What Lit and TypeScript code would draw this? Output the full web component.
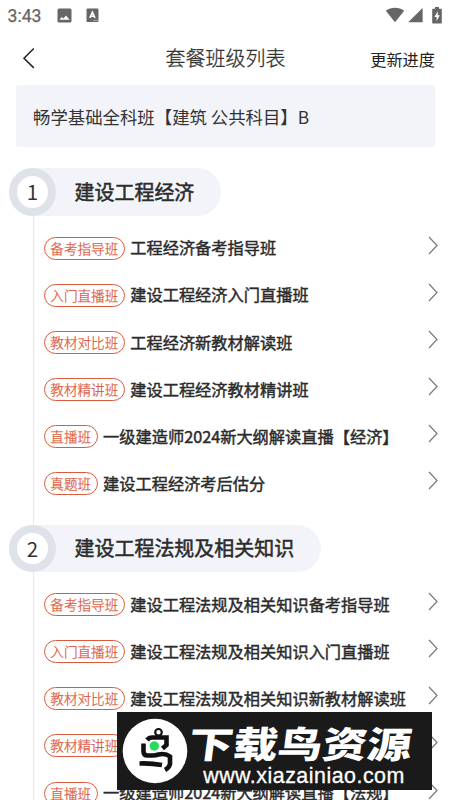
import { LitElement, html, css } from "lit";
import { customElement, property } from "lit/decorators.js";

interface Course { tag: string; name: string; }
interface Chapter { title: string; courses: Course[]; }

const chapters: Chapter[] = [
  {
    title: "建设工程经济",
    courses: [
      { tag: "备考指导班", name: "工程经济备考指导班" },
      { tag: "入门直播班", name: "建设工程经济入门直播班" },
      { tag: "教材对比班", name: "工程经济新教材解读班" },
      { tag: "教材精讲班", name: "建设工程经济教材精讲班" },
      { tag: "直播班", name: "一级建造师2024新大纲解读直播【经济】" },
      { tag: "真题班", name: "建设工程经济考后估分" },
    ],
  },
  {
    title: "建设工程法规及相关知识",
    courses: [
      { tag: "备考指导班", name: "建设工程法规及相关知识备考指导班" },
      { tag: "入门直播班", name: "建设工程法规及相关知识入门直播班" },
      { tag: "教材对比班", name: "建设工程法规及相关知识新教材解读班" },
      { tag: "教材精讲班", name: "建设工程法规及相关知识教材精讲班" },
      { tag: "直播班", name: "一级建造师2024新大纲解读直播【法规】" },
    ],
  },
];

@customElement("status-bar")
class StatusBar extends LitElement {
  static styles = css`
    :host { display: flex; align-items: center; height: 30px; padding: 0 8px 0 7.5px; box-sizing: border-box; color: #666; }
    .time { font: 400 17.6px/30px Roboto, sans-serif; -webkit-text-stroke: 0.25px #666; width: 49.5px; padding-top: 1px; box-sizing: border-box; }
    .spacer { flex: 1; }
    svg { display: block; }
    .letter { margin-left: 14px; }
    .signal { margin-left: 3px; }
    .battery { margin-left: 9px; }
  `;
  render() {
    return html`
      <span class="time">3:43</span>
      <svg width="15" height="15" viewBox="0 0 15 15"><rect x=".5" y=".5" width="14" height="14" rx="1.5" fill="#666"/><path d="M2.5 11.8L4.8 9l1.6 1.5L9 7.6l3.6 4.2z" fill="#fff"/></svg>
      <svg class="letter" width="13" height="15" viewBox="0 0 13 15"><rect x=".5" y=".5" width="12" height="13.6" rx="1.2" fill="#666"/><path d="M3.8 10L6.4 4.3 9 10M4.8 8.2h3.3" fill="none" stroke="#fff" stroke-width="1.6"/><path d="M7 12.4h5" stroke="#bbb" stroke-width=".8"/></svg>
      <span class="spacer"></span>
      <svg width="20" height="16" viewBox="0 0 20 16"><path d="M.8 3.7C5.8-.3 14.2-.3 19.2 3.7L10 15.2z" fill="#666"/></svg>
      <svg class="signal" width="15" height="16" viewBox="0 0 15 16"><path d="M14.6.9v14.3H.2z" fill="#666"/></svg>
      <svg class="battery" width="10" height="17" viewBox="0 0 10 17"><path d="M3 0h4v1.8h2.2q.6 0 .6.6v13.4q0 .7-.7.7H.9q-.7 0-.7-.7V2.4q0-.6.6-.6H3z" fill="#666"/><path d="M5.8 4.2L2.4 10h2.2v4l3.2-5.8H5.8z" fill="#fff"/></svg>
    `;
  }
}

@customElement("course-row")
class CourseRow extends LitElement {
  @property() tag = "";
  @property() name = "";
  static styles = css`
    :host { display: flex; align-items: center; height: 47.1px; padding: 0 12px 0 10px; box-sizing: border-box; }
    .tag { flex: none; box-sizing: border-box; height: 23px; padding: 0 5.8px; border: 1.4px solid #dc5a3e; border-radius: 12px; color: #dc5a3e; font-size: 13.6px; line-height: 21px; font-weight: 300; -webkit-text-stroke: 0.25px #dc5a3e; white-space: nowrap; }
    .name { margin: 0 0 1.5px 5.2px; font-size: 16.23px; line-height: 24px; color: #2b2b2b; -webkit-text-stroke: 0.45px #2b2b2b; white-space: nowrap; flex: 1; }
    svg { display: block; flex: none; margin-bottom: 6px; }
  `;
  render() {
    return html`
      <span class="tag">${this.tag}</span>
      <span class="name">${this.name}</span>
      <svg width="10" height="19" viewBox="0 0 10 19"><path d="M1 1l8 8.5L1 18" fill="none" stroke="#7a7a7a" stroke-width="1.2"/></svg>
    `;
  }
}

@customElement("chapter-section")
class ChapterSection extends LitElement {
  @property({ type: Number }) index = 1;
  @property({ attribute: false }) chapter!: Chapter;
  static styles = css`
    :host { display: block; }
    .head { display: flex; align-items: center; width: max-content; height: 47.5px; margin-left: 9px; padding-right: 26.5px; border-radius: 24px; background: #f2f4f9; }
    .num { box-sizing: border-box; width: 47px; height: 47.5px; border: 8.5px solid #e0e2e9; border-radius: 50%; background: #fff; text-align: center; font-size: 20.5px; line-height: 30px; color: #333; }
    .title { margin-left: 18.5px; font-size: 19.98px; line-height: 30px; color: #2b2b2b; -webkit-text-stroke: 0.5px #2b2b2b; }
    .list { margin-left: 32.5px; border-left: 1.5px solid #e7e8ee; padding: 9.1px 0 17.4px; }
  `;
  render() {
    return html`
      <div class="head"><span class="num">${this.index}</span><span class="title">${this.chapter.title}</span></div>
      <div class="list">
        ${this.chapter.courses.map((c) => html`<course-row .tag=${c.tag} .name=${c.name}></course-row>`)}
      </div>
    `;
  }
}

@customElement("site-banner")
class SiteBanner extends LitElement {
  static styles = css`
    :host { display: flex; align-items: center; width: 315px; height: 78px; box-sizing: border-box; padding-left: 5px; background: #1a1a1a; color: #fff; }
    svg { display: block; flex: none; }
    .words { display: flex; flex-direction: column; align-items: center; width: 230px; margin-left: -3px; padding-top: 9px; }
    .brand { font-size: 44.6px; line-height: 36px; height: 38px; font-weight: 900; white-space: nowrap; transform: scaleY(0.82) skewX(-6deg); }
    .url { font: 21.4px/24px "Liberation Sans", sans-serif; letter-spacing: 0.5px; -webkit-text-stroke: 0.3px #fff; margin: 2px 0 0 8px; }
  `;
  render() {
    return html`
      <svg width="66" height="66" viewBox="0 0 66 66">
        <circle cx="33" cy="33" r="32.3" fill="#fff"/>
        <g fill="none" stroke="#111" stroke-width="4.6">
          <circle cx="36.5" cy="14.3" r="3.3" stroke-width="2.2"/>
          <path d="M25 22q2-2.5 5-2.5h14.5v7.5l-4 3.5"/>
          <path d="M21.5 25.5v8q0 4 4 4h5q3 0 6-1 7-1.5 11.5 2v7.5q-1 4-5 6"/>
          <path d="M17.5 45.5q11-.5 22.5 1.5"/>
        </g>
        <circle cx="32.3" cy="28" r="4.7" fill="#27dc5a"/>
      </svg>
      <div class="words"><span class="brand">下载鸟资源</span><span class="url">www.xiazainiao.com</span></div>
    `;
  }
}

@customElement("app-root")
class AppRoot extends LitElement {
  static styles = css`
    :host { display: block; position: relative; width: 450px; height: 800px; overflow: hidden; background: #fff; font-family: "Noto Sans CJK SC", sans-serif; color: #333; }
    .nav { display: grid; grid-template-columns: 1fr auto 1fr; align-items: center; height: 55px; padding: 0 15px 0 22px; }
    .nav svg { display: block; }
    .heading { font-size: 20px; line-height: 30px; font-weight: 300; -webkit-text-stroke: 0.3px #333; margin-left: -6px; }
    .action { justify-self: end; font-size: 16.2px; line-height: 24px; padding-top: 3px; color: #222; }
    .package { margin: 0 15px 0 16px; height: 62px; padding: 1px 17px 0; box-sizing: border-box; border-radius: 3px; background: #f2f4f9; font-size: 17.4px; line-height: 62px; white-space: nowrap; }
    .chapters { padding-top: 21px; }
    .overlay { position: absolute; left: 117px; top: 712px; }
  `;
  render() {
    return html`
      <status-bar></status-bar>
      <div class="nav">
        <svg width="14" height="22" viewBox="0 0 14 22"><path d="M11.8 1.5L2 11.2l9.8 9.7" fill="none" stroke="#222" stroke-width="1.5"/></svg>
        <span class="heading">套餐班级列表</span>
        <span class="action">更新进度</span>
      </div>
      <div class="package">畅学基础全科班【建筑 公共科目】B</div>
      <div class="chapters">
        ${chapters.map((c, i) => html`<chapter-section .index=${i + 1} .chapter=${c}></chapter-section>`)}
      </div>
      <site-banner class="overlay"></site-banner>
    `;
  }
}
